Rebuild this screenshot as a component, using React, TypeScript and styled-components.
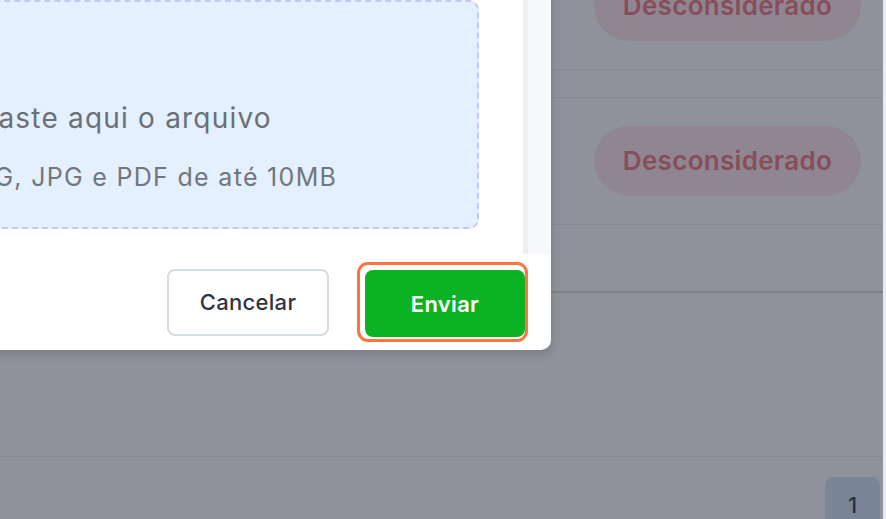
import React from "react";
import styled, { createGlobalStyle } from "styled-components";

const GlobalStyle = createGlobalStyle`
  html, body {
    margin: 0;
    padding: 0;
  }
  body {
    font-family: Inter, "Noto Sans", sans-serif;
    background: #ffffff;
    overflow: hidden;
  }
`;

const Screen = styled.div`
  position: relative;
  box-sizing: border-box;
  width: 886px;
  height: 519px;
  overflow: hidden;
  background: #ffffff;
  border-right: 3px solid #e9eaed;
`;

/* página por trás do modal */

const Table = styled.div`
  display: flex;
  flex-direction: column;
  margin-top: -57px;
`;

const Row = styled.div<{ $h: number; $line?: string }>`
  display: flex;
  align-items: center;
  justify-content: flex-end;
  height: ${(p) => p.$h}px;
  border-bottom: ${(p) => p.$line || "1px solid #eceef1"};
  padding-right: 22px;
  box-sizing: border-box;
`;

const StatusPill = styled.span`
  display: inline-flex;
  align-items: center;
  justify-content: center;
  width: 267px;
  height: 70px;
  border-radius: 35px;
  background: #ffe9ee;
  color: #f27d89;
  font-size: 26px;
  font-weight: 600;
  letter-spacing: 0.3px;
  padding-bottom: 2px;
  box-sizing: border-box;
`;

const Pagination = styled.div`
  display: flex;
  justify-content: flex-end;
  padding: 20px 3px 0 0;
`;

const PageButton = styled.span`
  display: flex;
  align-items: center;
  justify-content: center;
  width: 55px;
  height: 56px;
  border-radius: 8px;
  background: #d9e6fc;
  color: #37465f;
  font-size: 22px;
  font-weight: 500;
`;

/* modal */

const Overlay = styled.div`
  position: absolute;
  inset: 0;
  background: rgba(16, 24, 40, 0.47);
`;

const Modal = styled.div`
  position: absolute;
  left: -160px;
  top: -24px;
  width: 711px;
  display: flex;
  flex-direction: column;
  background: #ffffff;
  border-radius: 10px;
  box-shadow: 0 4px 10px rgba(16, 24, 40, 0.18);
`;

const Body = styled.div`
  display: flex;
`;

const Content = styled.div`
  flex: 1;
  padding: 24px 44px 25px 24px;
`;

const Scrollbar = styled.div`
  width: 23px;
  border-left: 5px solid #eceef1;
  background: #f8f9fc;
`;

const Dropzone = styled.div`
  box-sizing: border-box;
  height: 229px;
  display: flex;
  align-items: flex-start;
  gap: 24px;
  padding: 99px 20px 0;
  background: #e4f0fd;
  border: 2px dashed #c3c8f6;
  border-radius: 10px;
`;

const UploadIcon = styled.svg`
  flex: none;
  width: 44px;
  height: 44px;
  color: #7c8596;
`;

const Texts = styled.div`
  display: flex;
  flex-direction: column;
`;

const MainText = styled.span`
  font-size: 28px;
  line-height: 34px;
  letter-spacing: 1.2px;
  color: #6b6f76;
`;

const HintText = styled.span`
  margin-top: 26px;
  padding-left: 3px;
  font-size: 25px;
  line-height: 32px;
  letter-spacing: 1.3px;
  color: #72767d;
`;

const Footer = styled.div`
  display: flex;
  justify-content: flex-end;
  align-items: center;
  gap: 28px;
  padding: 8px 23px 8px 0;
`;

const Button = styled.button<{ $primary?: boolean }>`
  box-sizing: border-box;
  width: ${(p) => (p.$primary ? 160 : 162)}px;
  height: 67px;
  border-radius: 8px;
  font-family: Inter, "Noto Sans", sans-serif;
  font-size: 22px;
  font-weight: ${(p) => (p.$primary ? 600 : 500)};
  letter-spacing: 0.3px;
  cursor: pointer;
  border: ${(p) => (p.$primary ? "none" : "2px solid #d5dce2")};
  background: ${(p) => (p.$primary ? "#0bb324" : "#ffffff")};
  color: ${(p) => (p.$primary ? "#ffffff" : "#2e3440")};
`;

const Highlight = styled.span`
  display: inline-flex;
  padding: 5px 0 2px 5px;
  border: 3px solid #ff7340;
  border-radius: 11px;
`;

export default function App() {
  return (
    <>
      <GlobalStyle />
      <Screen>
        <Table>
          <Row $h={127}>
            <StatusPill>Desconsiderado</StatusPill>
          </Row>
          <Row $h={28} />
          <Row $h={127}>
            <StatusPill>Desconsiderado</StatusPill>
          </Row>
          <Row $h={68} $line="2px solid #dcdfe4" />
          <Row $h={164} />
        </Table>
        <Pagination>
          <PageButton>1</PageButton>
        </Pagination>

        <Overlay />

        <Modal>
          <Body>
            <Content>
              <Dropzone>
                <UploadIcon viewBox="0 0 24 24" fill="none" stroke="currentColor" strokeWidth="1.8" strokeLinecap="round" strokeLinejoin="round">
                  <path d="M12 16V4" />
                  <path d="M7 9l5-5 5 5" />
                  <path d="M4 16v3a1 1 0 0 0 1 1h14a1 1 0 0 0 1-1v-3" />
                </UploadIcon>
                <Texts>
                  <MainText>Arraste aqui o arquivo</MainText>
                  <HintText>PNG, JPG e PDF de até 10MB</HintText>
                </Texts>
              </Dropzone>
            </Content>
            <Scrollbar />
          </Body>
          <Footer>
            <Button>Cancelar</Button>
            <Highlight>
              <Button $primary>Enviar</Button>
            </Highlight>
          </Footer>
        </Modal>
      </Screen>
    </>
  );
}
